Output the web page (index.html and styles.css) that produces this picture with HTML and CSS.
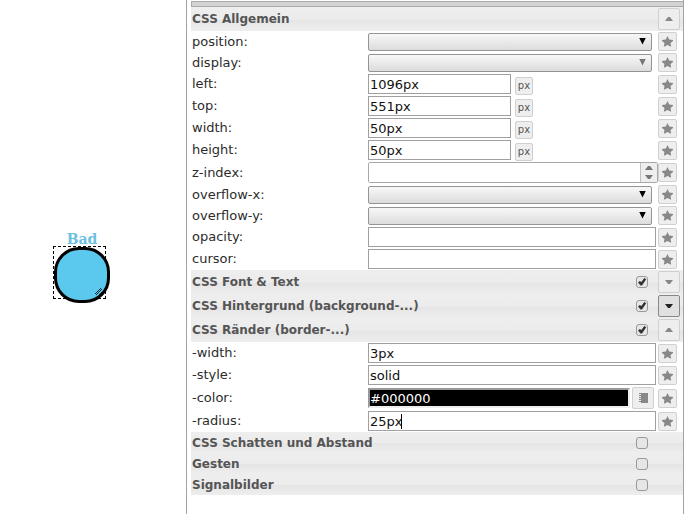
FILE: index.html
```html
<!DOCTYPE html>
<html lang="de">
<head>
<meta charset="utf-8">
<title>CSS Widget Editor</title>
<link rel="stylesheet" href="styles.css">
</head>
<body>
<svg class="defs" aria-hidden="true">
  <symbol id="star" viewBox="0 0 11 11"><path d="M5.500 0 7.200 3.500 11 3.900V5L8.500 7 9.200 10.500H8.400L5.500 9 2.600 10.500H1.800L2.500 7 0 5V3.900L3.800 3.500z"/></symbol>
  <symbol id="down" viewBox="0 0 8 4"><path d="M0 0h8L5 4H3z"/></symbol>
  <symbol id="up" viewBox="0 0 8 4"><path d="M0 4h8L5 0H3z"/></symbol>
  <symbol id="check" viewBox="0 0 12 12"><path d="M2 6.500 3.800 5l1.500 1L8.300 2 10.200 3.300 6 9.500H4.500z"/></symbol>
  <symbol id="book" viewBox="0 0 9 10"><path d="M2 0h7v10H2zM0 0h2v1H0zM0 2h2v1H0zM0 4h2v1H0zM0 6h2v1H0zM0 8h2v1H0z"/></symbol>
</svg>
<div class="editor">
  <main class="canvas">
    <div class="widget">
      <span class="widget-title">Bad</span>
      <div class="selection"></div>
      <div class="widget-shape"></div>
      <svg class="grip" viewBox="0 0 9 9" aria-hidden="true"><path d="M0 6 6 0M1 7 7 1M4 7 7 4"/></svg>
    </div>
  </main>
  <form class="panel">
    <div class="bar"></div>
    <div class="head tall"><h2>CSS Allgemein</h2><button type="button" class="toggle" aria-label="Zuklappen"><svg><use href="#up"/></svg></button></div>
    <div class="row"><label for="position">position:</label><div class="field"><span class="select"><select id="position"><option></option></select></span></div><button type="button" class="star" aria-label="Favorit"><svg><use href="#star"/></svg></button></div>
    <div class="row"><label for="display">display:</label><div class="field"><span class="select muted"><select id="display"><option></option></select></span></div><button type="button" class="star" aria-label="Favorit"><svg><use href="#star"/></svg></button></div>
    <div class="row text"><label for="left">left:</label><div class="field"><input class="short" id="left" value="1096px"><button type="button" class="unit">px</button></div><button type="button" class="star" aria-label="Favorit"><svg><use href="#star"/></svg></button></div>
    <div class="row text"><label for="top">top:</label><div class="field"><input class="short" id="top" value="551px"><button type="button" class="unit">px</button></div><button type="button" class="star" aria-label="Favorit"><svg><use href="#star"/></svg></button></div>
    <div class="row text"><label for="width">width:</label><div class="field"><input class="short" id="width" value="50px"><button type="button" class="unit">px</button></div><button type="button" class="star" aria-label="Favorit"><svg><use href="#star"/></svg></button></div>
    <div class="row text"><label for="height">height:</label><div class="field"><input class="short" id="height" value="50px"><button type="button" class="unit">px</button></div><button type="button" class="star" aria-label="Favorit"><svg><use href="#star"/></svg></button></div>
    <div class="row spin"><label for="zindex">z-index:</label><div class="field"><span class="spinner"><input id="zindex"><span class="steps"><button type="button" aria-label="Mehr"><svg><use href="#up"/></svg></button><button type="button" aria-label="Weniger"><svg><use href="#down"/></svg></button></span></span></div><button type="button" class="star" aria-label="Favorit"><svg><use href="#star"/></svg></button></div>
    <div class="row"><label for="overflowx">overflow-x:</label><div class="field"><span class="select"><select id="overflowx"><option></option></select></span></div><button type="button" class="star" aria-label="Favorit"><svg><use href="#star"/></svg></button></div>
    <div class="row"><label for="overflowy">overflow-y:</label><div class="field"><span class="select"><select id="overflowy"><option></option></select></span></div><button type="button" class="star" aria-label="Favorit"><svg><use href="#star"/></svg></button></div>
    <div class="row text"><label for="opacity">opacity:</label><div class="field"><input id="opacity"></div><button type="button" class="star" aria-label="Favorit"><svg><use href="#star"/></svg></button></div>
    <div class="row text"><label for="cursor">cursor:</label><div class="field"><input id="cursor"></div><button type="button" class="star" aria-label="Favorit"><svg><use href="#star"/></svg></button></div>

    <div class="head tall"><h2><label for="c1">CSS Font &amp; Text</label></h2><span class="check"><input type="checkbox" id="c1" checked><svg><use href="#check"/></svg></span><button type="button" class="toggle" aria-label="Aufklappen"><svg><use href="#down"/></svg></button></div>
    <div class="head tall"><h2><label for="c2">CSS Hintergrund (background-...)</label></h2><span class="check"><input type="checkbox" id="c2" checked><svg><use href="#check"/></svg></span><button type="button" class="toggle active" aria-label="Aufklappen"><svg><use href="#down"/></svg></button></div>
    <div class="head tall"><h2><label for="c3">CSS Ränder (border-...)</label></h2><span class="check"><input type="checkbox" id="c3" checked><svg><use href="#check"/></svg></span><button type="button" class="toggle" aria-label="Zuklappen"><svg><use href="#up"/></svg></button></div>
    <div class="row text"><label for="bwidth">-width:</label><div class="field"><input id="bwidth" value="3px"></div><button type="button" class="star" aria-label="Favorit"><svg><use href="#star"/></svg></button></div>
    <div class="row text"><label for="bstyle">-style:</label><div class="field"><input id="bstyle" value="solid"></div><button type="button" class="star" aria-label="Favorit"><svg><use href="#star"/></svg></button></div>
    <div class="row color"><label for="bcolor">-color:</label><div class="field"><input class="swatch" id="bcolor" value="#000000"><button type="button" class="pick" aria-label="Farbe"><svg><use href="#book"/></svg></button></div><button type="button" class="star" aria-label="Favorit"><svg><use href="#star"/></svg></button></div>
    <div class="row text"><label for="bradius">-radius:</label><div class="field"><input id="bradius" value="25px"><i class="caret"></i></div><button type="button" class="star" aria-label="Favorit"><svg><use href="#star"/></svg></button></div>

    <div class="head"><h2><label for="c4">CSS Schatten und Abstand</label></h2><span class="check"><input type="checkbox" id="c4"></span></div>
    <div class="head"><h2><label for="c5">Gesten</label></h2><span class="check"><input type="checkbox" id="c5"></span></div>
    <div class="head"><h2><label for="c6">Signalbilder</label></h2><span class="check"><input type="checkbox" id="c6"></span></div>
  </form>
</div>
</body>
</html>
```
FILE: styles.css
```css
* { box-sizing: border-box; }
body {
  margin: 0;
  background: #fff;
  color: #2c2c2c;
  font: 13px/18px "DejaVu Sans", sans-serif;
}
svg { display: block; fill: currentColor; }
input, select, button {
  margin: 0;
  padding: 0;
  font: inherit;
  border-radius: 0;
}
.defs { display: none; }
.editor { display: flex; min-height: 100vh; }

.canvas { position: relative; flex: 0 0 186px; }
.widget { position: absolute; left: 54px; top: 247px; width: 56px; height: 56px; }
.widget-title {
  position: absolute;
  left: 0;
  right: 0;
  top: -16px;
  text-align: center;
  color: #6bc1df;
  font: bold 14px/16px "DejaVu Serif", serif;
}
.widget-shape {
  position: relative;
  height: 56px;
  border: 3px solid #000;
  border-radius: 25px;
  background: #5bc8ee;
}
.selection {
  position: absolute;
  left: -1px;
  top: -1px;
  width: 53px;
  height: 53px;
  border: 1px dashed #000;
}
.grip {
  position: absolute;
  left: 41px;
  top: 41px;
  width: 9px;
  height: 9px;
  fill: none;
  stroke: #000;
  stroke-width: .8;
}

.panel {
  flex: 1;
  min-width: 0;
  padding: 1px 0 0 4px;
  border-left: 1px solid #a2a2a2;
  border-right: 1px solid #a2a2a2;
}
.bar { height: 6px; border: 1px solid #aaa; border-right: 0; background: #d3d3d3; }

.head {
  display: grid;
  grid-template-columns: 1fr 12px 22px;
  column-gap: 10px;
  align-items: center;
  height: 21px;
  padding: 0 3px 0 1px;
  background: linear-gradient(#eee, #ececec 50%, #e5e5e5 55%, #eee);
  color: #555;
}
.head.tall { height: 24px; }
.head h2 { margin: 0; font-size: 12px; line-height: 18px; font-weight: bold; }
.check { position: relative; height: 12px; }
.check input {
  appearance: none;
  display: block;
  width: 12px;
  height: 12px;
  border: 1px solid #999;
  border-radius: 3px;
  background: #e6e6e6;
}
.check svg { position: absolute; inset: 0; width: 12px; height: 12px; color: #333; pointer-events: none; }

.toggle, .star, .unit, .pick {
  display: flex;
  align-items: center;
  justify-content: center;
  border: 1px solid #d0d0d0;
  border-radius: 2px;
  background: #eee;
  color: #888;
}
.toggle { grid-column: 3; width: 22px; height: 22px; }
.toggle svg { width: 8px; height: 4px; }
.toggle.active { border-color: #888; background: #e0e0e0; color: #222; }

.row {
  display: grid;
  grid-template-columns: 176px 1fr 19px;
  align-items: center;
  height: 21px;
  padding: 0 6px 0 1px;
}
.row.text { height: 22px; }
.row.spin { height: 23px; }
.row.color { height: 24px; }
.field { position: relative; display: flex; align-items: center; padding-right: 2px; }
.field input {
  flex: 1;
  min-width: 0;
  height: 20px;
  padding: 0 1px;
  border: 1px solid #a0a0a0;
  background: #fff;
  color: #111;
}
.field .short { flex: 0 0 143px; }
.unit {
  width: 18px;
  height: 18px;
  margin: 3px 0 0 4px;
  font-size: 10px;
  line-height: 14px;
  color: #555;
}
.star { width: 19px; height: 19px; }
.star svg { width: 11px; height: 11px; }

.select { position: relative; flex: 1; margin-right: 4px; height: 18px; }
.select select {
  appearance: none;
  display: block;
  width: 100%;
  height: 18px;
  border: 1px solid #949494;
  border-radius: 2px;
  background: linear-gradient(#f8f8f8, #dcdcdc);
}
.select::after {
  content: "";
  position: absolute;
  right: 6px;
  top: 5px;
  width: 7px;
  height: 7px;
  background: #000;
  clip-path: polygon(0 0, 100% 0, 50% 100%);
  pointer-events: none;
}
.select.muted::after { background: #777; }

.spinner { display: flex; flex: 1; height: 21px; margin-right: -2px; border: 1px solid #a8a8a8; border-radius: 2px; }
.spinner input { height: 19px; border: 0; }
.steps { display: grid; width: 17px; border-left: 1px solid #c0c0c0; background: #eee; }
.steps button { display: grid; place-items: center; height: 9px; border: 0; background: none; color: #777; }
.steps svg { width: 8px; height: 4px; }

.field .swatch {
  border: 2px solid #eee;
  border-top-color: #999;
  border-left-color: #999;
  padding: 0;
  background: #000;
  color: #fff;
}
.pick { width: 22px; height: 22px; margin: 0 2px; }
.pick svg { width: 9px; height: 10px; }
.caret { position: absolute; left: 33px; top: 3px; width: 1px; height: 15px; background: #000; }
```
